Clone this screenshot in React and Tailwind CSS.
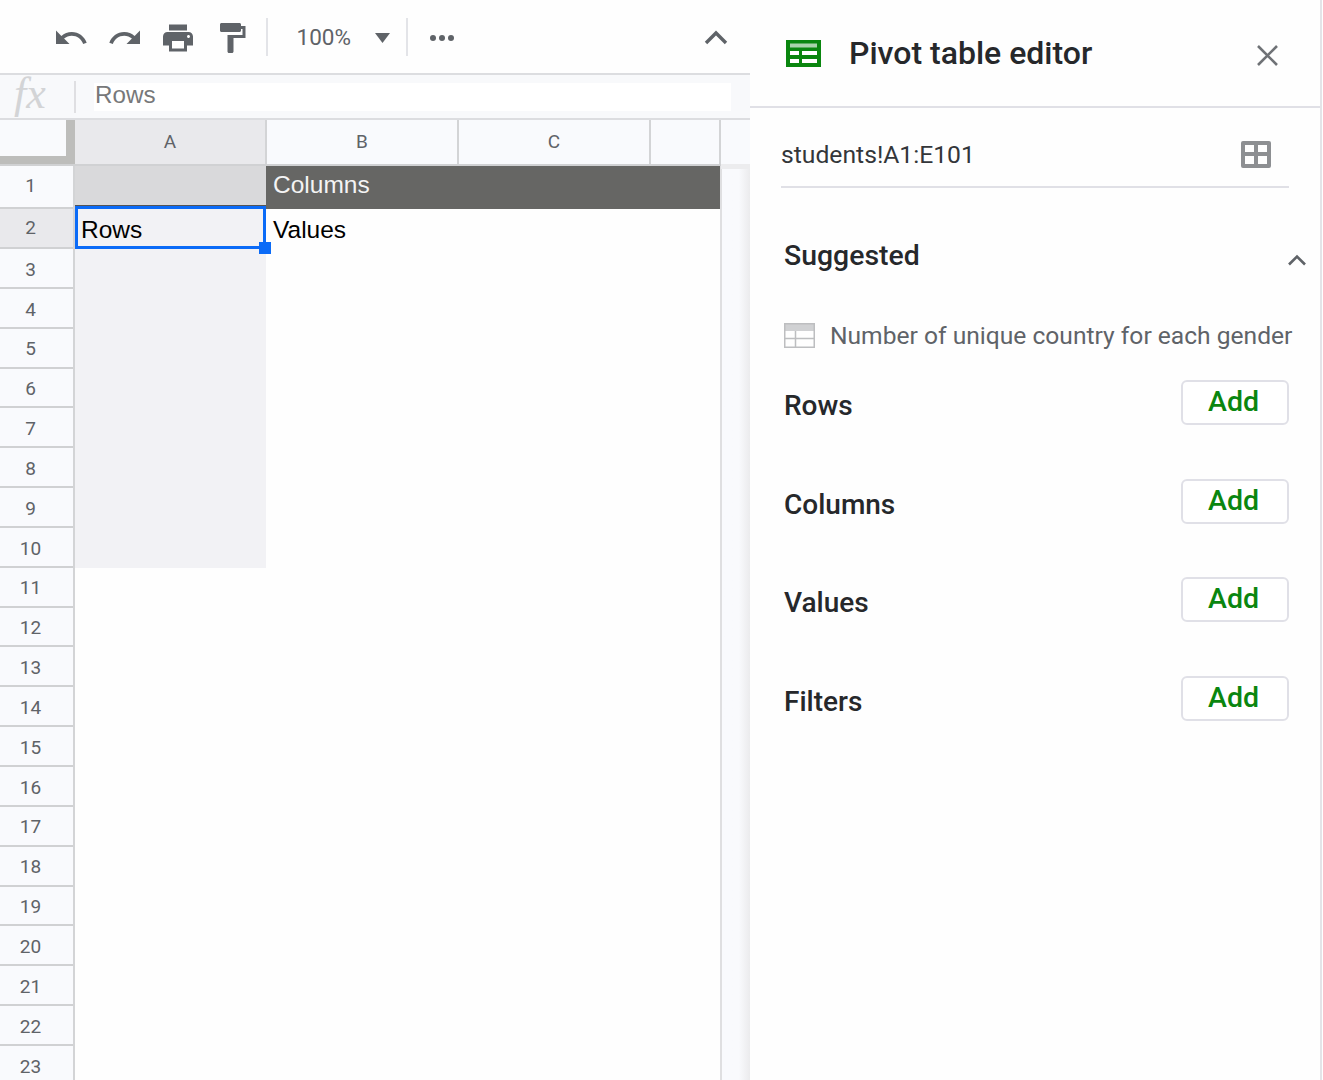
import React from 'react';

const rows = Array.from({ length: 23 }, (_, i) => i + 1);
const arial = 'font-["Liberation_Sans",Arial,sans-serif]';

const rowHeight = (n) => {
  if (n === 1) return 'h-[43px]';
  if (n === 2) return 'h-[40px]';
  return 'h-[39.85px] pt-[4px]';
};

const ToolIcon = ({ d }) => (
  <svg width="36" height="36" viewBox="0 0 24 24" className="shrink-0 fill-[#5f6368]">
    <path d={d} />
  </svg>
);

const Toolbar = () => (
  <div className="h-[73px] shrink-0 flex items-center pl-[53px] pr-[20px] pt-[3px] bg-[#fefefe]">
    <div className="flex items-center gap-[17.5px]">
      <ToolIcon d="M12.5 8c-2.65 0-5.05.99-6.9 2.6L2 7v9h9l-3.62-3.62c1.39-1.16 3.16-1.88 5.12-1.88 3.54 0 6.55 2.31 7.6 5.5l2.37-.78C21.08 11.03 17.15 8 12.5 8z" />
      <ToolIcon d="M18.4 10.6C16.55 8.99 14.15 8 11.5 8c-4.65 0-8.58 3.03-9.96 7.22L3.9 16c1.05-3.19 4.05-5.5 7.6-5.5 1.95 0 3.73.72 5.12 1.88L13 16h9V7l-3.6 3.6z" />
      <ToolIcon d="M19 8H5c-1.66 0-3 1.34-3 3v6h4v4h12v-4h4v-6c0-1.66-1.34-3-3-3zm-3 11H8v-5h8v5zm3-7c-.55 0-1-.45-1-1s.45-1 1-1 1 .45 1 1-.45 1-1 1zm-1-9H6v4h12V3z" />
      <ToolIcon d="M18 4V3c0-.55-.45-1-1-1H5c-.55 0-1 .45-1 1v4c0 .55.45 1 1 1h12c.55 0 1-.45 1-1V6h1v4H9v11c0 .55.45 1 1 1h2c.55 0 1-.45 1-1v-9h8V4h-3z" />
    </div>
    <div className="w-[2px] h-[38px] bg-[#e3e4e8] ml-[16px] -mt-[3px]" />
    <span className="ml-[29px] text-[22.5px] text-[#5f6368] font-['Roboto',sans-serif]">100%</span>
    <svg width="15" height="10" viewBox="0 0 15 10" className="ml-[24px] fill-[#5f6368]">
      <path d="M0 0h15L7.5 10z" />
    </svg>
    <div className="w-[2px] h-[38px] bg-[#e3e4e8] ml-[16px] -mt-[3px]" />
    <div className="flex gap-[3px] ml-[22px]">
      <span className="w-[6px] h-[6px] rounded-full bg-[#5f6368]" />
      <span className="w-[6px] h-[6px] rounded-full bg-[#5f6368]" />
      <span className="w-[6px] h-[6px] rounded-full bg-[#5f6368]" />
    </div>
    <svg width="24" height="16" viewBox="0 0 24 16" className="ml-auto mr-[2px] -mt-[3px] fill-none stroke-[#5f6368] stroke-[3.4]">
      <path d="M2 14 12 4l10 10" />
    </svg>
  </div>
);

const FormulaBar = () => (
  <div className="h-[47px] shrink-0 flex items-center bg-[#f8f9fb] border-y-2 border-[#dcdde0]">
    <span className="w-[75px] pl-[14px] text-[44px] leading-none italic text-[#d3d4d6] font-['Liberation_Serif',serif] -mt-[6px]">fx</span>
    <div className="w-[2px] h-[32px] bg-[#dfdfe2] -ml-[1px]" />
    <div className={`ml-[18px] w-[637px] h-[28px] bg-white flex items-center text-[24.2px] text-[#77787a] ${arial} pl-[1px] pb-[2px]`}>
      Rows
    </div>
  </div>
);

const ColumnHeader = ({ label, width, active }) => (
  <div className={`${width} h-full flex items-center justify-center border-r-2 border-[#d3d4d6] text-[19px] text-[#5f6368] font-['Roboto',sans-serif] ${active ? 'bg-[#e9e9ec]' : ''}`}>
    {label}
  </div>
);

const HeaderRow = () => (
  <div className="h-[46px] shrink-0 flex bg-[#f9fafd] border-b-2 border-[#d0d1d3]">
    <div className="w-[75px] h-full bg-[#bdbdbb] shrink-0">
      <div className="w-[66px] h-[36px] bg-[#f9fafd]" />
    </div>
    <ColumnHeader label="A" width="w-[192px]" active />
    <ColumnHeader label="B" width="w-[192px]" />
    <ColumnHeader label="C" width="w-[192px]" />
    <ColumnHeader label="" width="w-[70px]" />
    <div className="flex-1 flex items-end">
      <div className="w-full h-[5px] bg-[#ececee] -mb-[5px] relative" />
    </div>
  </div>
);

const RowNumbers = () => (
  <div className="w-[75px] shrink-0 bg-[#f9fafd] border-r-2 border-[#d3d4d6]">
    {rows.map((n) => (
      <div
        key={n}
        className={`${rowHeight(n)} flex items-center justify-center pr-[12px] border-b-2 border-[#d0d1d3] text-[19px] text-[#5f6368] font-['Roboto',sans-serif] ${n === 2 ? 'bg-[#e9e9ec]' : ''}`}
      >
        {n}
      </div>
    ))}
  </div>
);

const Cells = () => (
  <div className={`w-[645px] shrink-0 bg-[#fefefe] ${arial} text-[24.5px] text-black`}>
    <div className="flex h-[43px]">
      <div className="w-[191px] bg-[#d9d9db]" />
      <div className="flex-1 bg-[#666664] text-[#f4f4f4] pl-[7px] pb-[5px] flex items-center">Columns</div>
    </div>
    <div className="flex h-[40px]">
      <div className="w-[191px] h-[43px] -mt-[3px] relative bg-[#f2f2f5] border-[3px] border-[#0b6bf7] shadow-[0_-1px_0_#555] pl-[3px] pt-[5px] flex items-center">
        Rows
        <span className="absolute -right-[8px] -bottom-[8px] w-[12px] h-[12px] bg-[#0b6bf7]" />
      </div>
      <div className="flex-1 pl-[7px] pt-[2px] flex items-center">Values</div>
    </div>
    <div className="w-[191px] h-[319px] bg-[#f2f2f5]" />
  </div>
);

const Sheet = () => (
  <div className="w-[750px] h-[1080px] overflow-hidden shrink-0 flex flex-col">
    <Toolbar />
    <FormulaBar />
    <HeaderRow />
    <div className="flex flex-1 min-h-0">
      <RowNumbers />
      <Cells />
      <div className="flex-1 border-l-2 border-[#dfdfe1] bg-gradient-to-r from-[#f9fafd] from-60% to-[#ebebed]" />
    </div>
  </div>
);

const Field = ({ label }) => (
  <div className="h-[98.6px] flex items-start justify-between pl-[34px] pr-[31px]">
    <span className="mt-[8px] text-[28px] leading-[36px] font-medium text-[#26282b]">{label}</span>
    <button className="w-[108px] h-[45px] rounded-[6px] border-2 border-[#e0e0e7] bg-white text-[28.5px] leading-none font-medium text-[#0a860f] pr-[3px]">
      Add
    </button>
  </div>
);

const Panel = () => (
  <div className="w-[572px] h-[1080px] shrink-0 bg-[#fefefe] border-r-2 border-[#e4e4e8] font-['Roboto',sans-serif]">
    <div className="h-[108px] flex items-center border-b-2 border-[#e0e0e6] pl-[36px] pr-[41px]">
      <svg width="35" height="27" viewBox="0 0 35 27" className="shrink-0">
        <rect width="35" height="27" fill="#0a860f" />
        <rect x="4" y="3.5" width="27" height="4" fill="#a9d3ab" />
        <rect x="4" y="11" width="9" height="4" fill="#fff" />
        <rect x="16" y="11" width="15" height="4" fill="#fff" />
        <rect x="4" y="19" width="9" height="4" fill="#fff" />
        <rect x="16" y="19" width="15" height="4" fill="#fff" />
      </svg>
      <span className="ml-[28px] text-[32px] leading-none font-medium text-[#26282b]">Pivot table editor</span>
      <svg width="24" height="24" viewBox="0 0 24 24" className="ml-auto mt-[4px] fill-none stroke-[#6f7276] stroke-[2.6]">
        <path d="M3 3l19 19M22 3 3 22" />
      </svg>
    </div>
    <div className="mx-[31px] h-[80px] pt-[15px] flex items-center justify-between border-b-2 border-[#e0e0e6]">
      <span className="text-[24.7px] text-[#33363a]">students!A1:E101</span>
      <svg width="30" height="27" viewBox="0 0 30 27" className="mr-[18px] shrink-0 -mt-[1px]">
        <path fillRule="evenodd" fill="#8d8f92" d="M2 0h26a2 2 0 0 1 2 2v23a2 2 0 0 1-2 2H2a2 2 0 0 1-2-2V2a2 2 0 0 1 2-2zm2 4v7h9V4zm13 0v7h9V4zM4 15v8h9v-8zm13 0v8h9v-8z" />
      </svg>
    </div>
    <div className="h-[136px] pl-[34px] pr-[13px] flex items-start justify-between pt-[50px]">
      <span className="text-[28.4px] leading-[36px] font-medium text-[#26282b]">Suggested</span>
      <svg width="20" height="13" viewBox="0 0 20 13" className="mt-[15px] fill-none stroke-[#5f6368] stroke-[2.6]">
        <path d="M2 11.5 10 3.5l8 8" />
      </svg>
    </div>
    <div className="h-[56px] pl-[34px] flex items-start">
      <svg width="31" height="25" viewBox="0 0 31 25" className="shrink-0 -mt-[1px]">
        <rect x="0" y="0" width="31" height="8" fill="#d0d1d3" />
        <rect x="0.75" y="0.75" width="29.5" height="23.5" fill="none" stroke="#bdbec0" strokeWidth="1.5" />
        <path d="M1 15.5h29M11.5 8v16" fill="none" stroke="#bdbec0" strokeWidth="1.5" />
      </svg>
      <span className="ml-[15px] -mt-[1px] text-[24.6px] leading-[25px] text-[#5f6368] whitespace-nowrap">Number of unique country for each gender</span>
    </div>
    <Field label="Rows" />
    <Field label="Columns" />
    <Field label="Values" />
    <Field label="Filters" />
  </div>
);

const App = () => (
  <div className="w-[1323px] h-[1080px] flex overflow-hidden bg-white">
    <Sheet />
    <Panel />
  </div>
);

export default App;
